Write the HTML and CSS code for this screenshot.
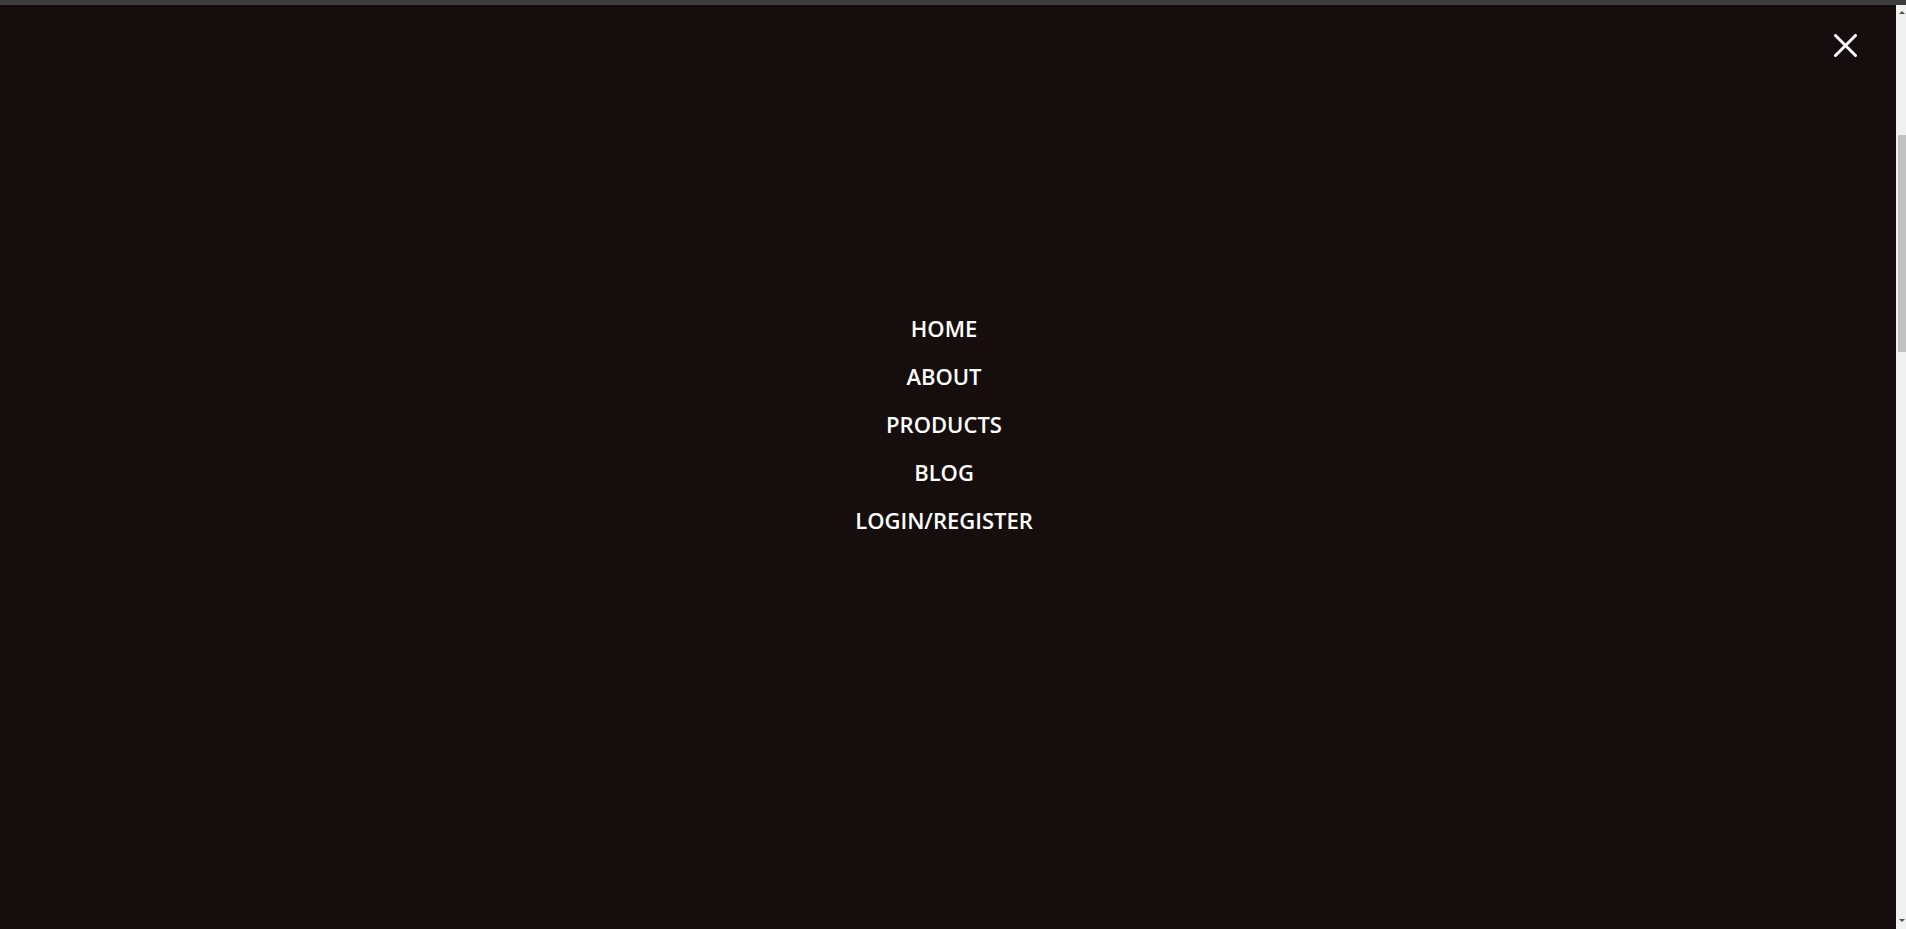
FILE: index.html
```html
<!DOCTYPE html>
<html lang="en">
<head>
<meta charset="utf-8">
<title>Menu</title>
<link rel="stylesheet" href="styles.css">
</head>
<body>
<div class="topbar"></div>
<div class="frame">
  <main class="overlay">
    <button class="close" aria-label="Close">
      <svg width="23" height="23" viewBox="0 0 23 23"><path d="M1.5 1.5 L21.5 21.5 M21.5 1.5 L1.5 21.5" stroke="#fff" stroke-width="3" stroke-linecap="round" fill="none"/></svg>
    </button>
    <nav class="menu">
      <a href="#">HOME</a>
      <a href="#">ABOUT</a>
      <a href="#">PRODUCTS</a>
      <a href="#">BLOG</a>
      <a href="#">LOGIN/REGISTER</a>
    </nav>
  </main>
  <div class="scrollbar">
    <div class="arrow up"></div>
    <div class="thumb"></div>
    <div class="spacer"></div>
    <div class="arrow down"></div>
  </div>
</div>
</body>
</html>
```
FILE: styles.css
```css
html, body {
  margin: 0;
  padding: 0;
  height: 100%;
  overflow: hidden;
  background: #160e0c;
}
body {
  display: flex;
  flex-direction: column;
  font-family: "Open Sans", "Liberation Sans", sans-serif;
}
.topbar {
  height: 5px;
  background: #3d3d3d;
  flex: none;
}
.frame {
  flex: 1;
  display: flex;
  min-height: 0;
}
.overlay {
  flex: 1;
  position: relative;
  background: #160e0c;
  padding: 299px 8px 0 0;
}
.close {
  position: absolute;
  top: 29px;
  right: 39px;
  width: 23px;
  height: 23px;
  padding: 0;
  border: 0;
  background: none;
  cursor: pointer;
}
.close svg { display: block; }
.menu {
  display: flex;
  flex-direction: column;
  align-items: center;
}
.menu a {
  color: #fff;
  text-decoration: none;
  font-size: 22px;
  font-weight: 600;
  line-height: 48px;
}
.scrollbar {
  width: 10px;
  flex: none;
  background: #f1f1f1;
  display: flex;
  flex-direction: column;
  align-items: center;
}
.arrow {
  width: 0;
  height: 0;
  border-left: 3px solid transparent;
  border-right: 3px solid transparent;
  margin-left: 2px;
}
.arrow.up {
  border-bottom: 3px solid #505050;
  margin-top: 6px;
}
.arrow.down {
  border-top: 3px solid #505050;
  margin-bottom: 7px;
}
.thumb {
  width: 8px;
  margin-left: 2px;
  height: 217px;
  margin-top: 121px;
  background: #c1c1c1;
}
.spacer { flex: 1; }
```
